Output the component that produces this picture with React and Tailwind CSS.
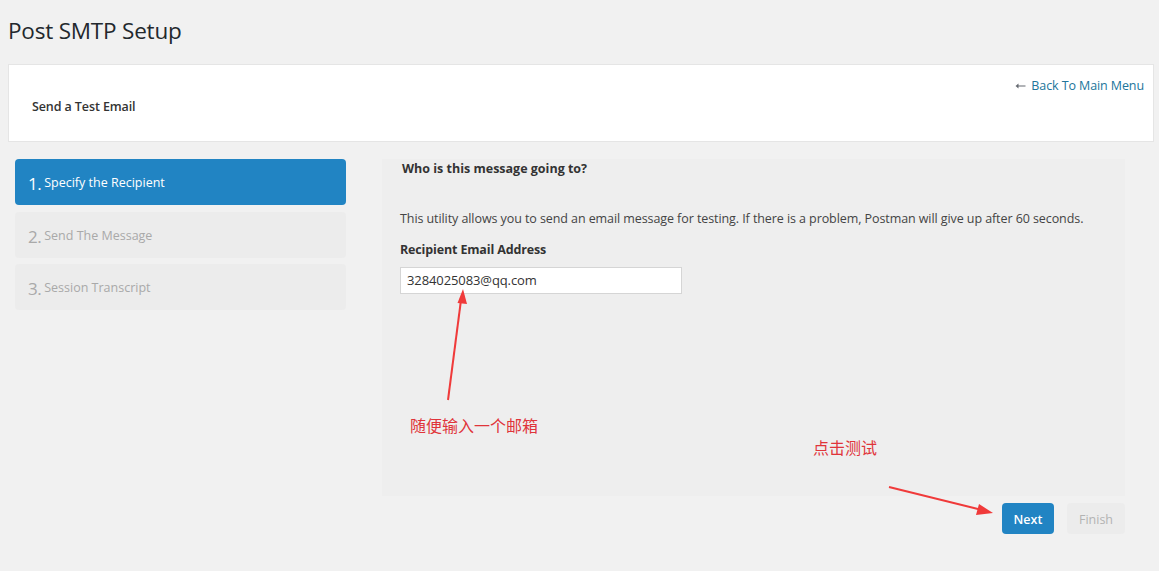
import React from "react";

const font = { fontFamily: '"Open Sans", "Noto Sans", "Liberation Sans", sans-serif' };

function Step({ num, label, active }) {
  return (
    <div
      className={
        "h-[46px] rounded-[4px] flex items-center pl-[13px] pt-[3px] " +
        (active ? "bg-[#2184c3] text-white" : "bg-[#ececec] text-[#a9a9a9]")
      }
    >
      <span className="text-[17px] leading-none tracking-[-0.5px]">{num}.</span>
      <span className="text-[12.5px] leading-none ml-[3px] tracking-[0px]">{label}</span>
    </div>
  );
}

export default function App() {
  return (
    <div
      className="relative w-[1159px] h-[571px] bg-[#f1f1f1] overflow-hidden text-[#444]"
      style={font}
    >
      <div className="pl-[8px] pr-[5px]">
        <h1 className="pt-[16px] h-[64px] text-[22.5px] leading-[30px] text-[#23282d] tracking-[-0.2px]">
          Post SMTP Setup
        </h1>
        <div className="h-[78px] bg-white border border-[#e5e5e5] relative">
          <a className="absolute right-[9px] top-[12px] text-[12.5px] text-[#21759b] tracking-[-0.1px] flex items-center gap-[5px]">
            <svg width="11" height="6" viewBox="0 0 11 6">
              <path d="M0.5 3 L3.5 0.5 L3.5 2.4 L10.5 2.4 L10.5 3.6 L3.5 3.6 L3.5 5.5 Z" fill="#646970" />
            </svg>
            <span>Back To Main Menu</span>
          </a>
          <div className="pl-[23px] pt-[33px] text-[12.5px] font-semibold text-[#333] tracking-[-0.1px]">
            Send a Test Email
          </div>
        </div>
      </div>

      <div className="flex mt-[17px] pl-[15px]">
        <div className="w-[331px] flex flex-col gap-[6.5px]">
          <Step num="1" label="Specify the Recipient" active />
          <Step num="2" label="Send The Message" />
          <Step num="3" label="Session Transcript" />
        </div>

        <div className="ml-[36px] w-[743px]">
          <div className="h-[337px] bg-[#eeeeee] pl-[18px] pt-[1px]">
            <div className="text-[12.5px] font-bold text-[#333] leading-[18px] pl-[2px] tracking-[0px]">
              Who is this message going to?
            </div>
            <p className="text-[12.5px] text-[#444] leading-[18px] mt-[32px] tracking-[-0.08px]">
              This utility allows you to send an email message for testing. If there is a problem, Postman will give up after 60 seconds.
            </p>
            <div className="text-[12.5px] font-bold text-[#333] leading-[18px] mt-[13px] tracking-[-0.15px]">
              Recipient Email Address
            </div>
            <div className="mt-[8px] w-[282px] h-[27px] bg-white border border-[#d5d5d5] flex items-center pl-[6px] text-[13px] text-[#333] tracking-[-0.1px]">
              3284025083@qq.com
            </div>
          </div>
          <div className="flex justify-end gap-[13px] mt-[7px]">
            <button className="w-[52px] h-[31px] rounded-[4px] bg-[#2184c3] text-white text-[12.5px] font-semibold pt-[3px]">
              Next
            </button>
            <button className="w-[58px] h-[31px] rounded-[4px] bg-[#ececec] text-[#b3b3b3] text-[12.5px] pt-[3px]">
              Finish
            </button>
          </div>
        </div>
      </div>

      <div
        className="absolute left-[410px] top-[414px] text-[16px] text-[#e0343a] leading-[22px]"
        style={{ fontFamily: '"Noto Sans CJK SC", sans-serif' }}
      >
        随便输入一个邮箱
      </div>
      <div
        className="absolute left-[813px] top-[436px] text-[16px] text-[#e0343a] leading-[22px]"
        style={{ fontFamily: '"Noto Sans CJK SC", sans-serif' }}
      >
        点击测试
      </div>

      <svg className="absolute left-0 top-0 pointer-events-none" width="1159" height="571">
        <line x1="448" y1="400" x2="461" y2="300" stroke="#f03a3a" strokeWidth="2" />
        <polygon points="463,289 457.5,303 467,304" fill="#f03a3a" />
        <line x1="889" y1="487" x2="982" y2="510" stroke="#f03a3a" strokeWidth="2" />
        <polygon points="993,513 979,504 976,515" fill="#f03a3a" />
      </svg>
    </div>
  );
}
